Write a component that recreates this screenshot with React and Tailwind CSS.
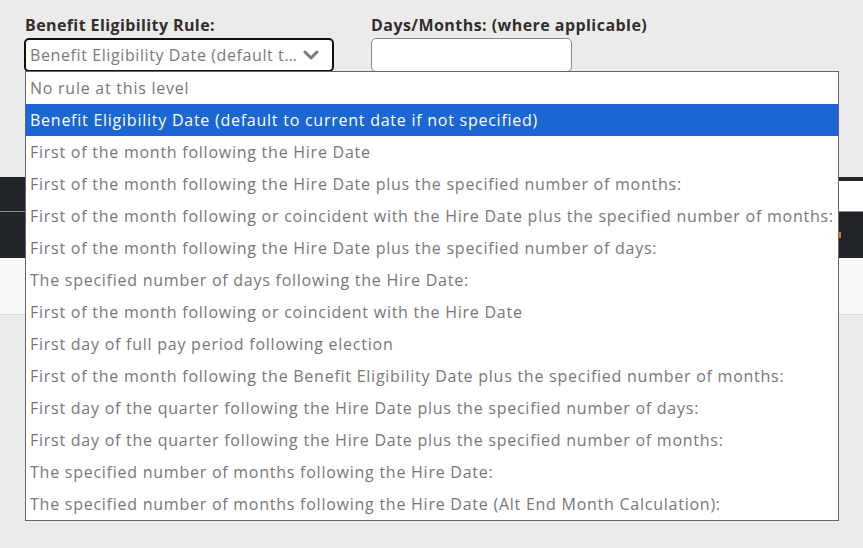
const RULES = [
  'No rule at this level',
  'Benefit Eligibility Date (default to current date if not specified)',
  'First of the month following the Hire Date',
  'First of the month following the Hire Date plus the specified number of months:',
  'First of the month following or coincident with the Hire Date plus the specified number of months:',
  'First of the month following the Hire Date plus the specified number of days:',
  'The specified number of days following the Hire Date:',
  'First of the month following or coincident with the Hire Date',
  'First day of full pay period following election',
  'First of the month following the Benefit Eligibility Date plus the specified number of months:',
  'First day of the quarter following the Hire Date plus the specified number of days:',
  'First day of the quarter following the Hire Date plus the specified number of months:',
  'The specified number of months following the Hire Date:',
  'The specified number of months following the Hire Date (Alt End Month Calculation):',
]

const SELECTED = 1

function Chevron() {
  return (
    <svg width="16" height="10" viewBox="0 0 16 10" className="shrink-0">
      <polyline points="2,2 8,8 14,2" fill="none" stroke="#7a7a7a" strokeWidth="3" strokeLinecap="round" strokeLinejoin="round" />
    </svg>
  )
}

export default function App() {
  return (
    <div className="min-h-[548px] bg-[#ebebeb] text-[16px] font-['Open_Sans','Liberation_Sans',sans-serif] [font-variant-ligatures:none]">
      {/* form row */}
      <div className="relative h-[177px] pt-[14px] pl-[25px]">
        <div className="flex gap-[37px]">
          <div className="flex flex-col">
            <label className="font-bold text-[#332e2c] leading-[22px] mb-[2px] tracking-[0.4px]">Benefit Eligibility Rule:</label>
            <div className="w-[310px] h-[34px] bg-white border-2 border-[#111] rounded-[5px] flex items-center justify-between pl-[4px] pr-[13px] -ml-px">
              <span className="text-[#7a7a7a] whitespace-nowrap tracking-[0.6px]">Benefit Eligibility Date (default t…</span>
              <Chevron />
            </div>
          </div>
          <div className="flex flex-col">
            <label className="font-bold text-[#332e2c] leading-[22px] mb-[2px] tracking-[0.45px]">Days/Months: (where applicable)</label>
            <div className="w-[201px] h-[34px] bg-white border border-[#8a8a8a] rounded-[5px]" />
          </div>
        </div>

        {/* open dropdown list */}
        <ul className="absolute z-10 left-[25px] top-[71px] w-[814px] bg-white border border-[#666] tracking-[0.75px]">
          {RULES.map((r, i) => (
            <li
              key={i}
              className={`h-[32px] flex items-center pl-[4px] whitespace-nowrap overflow-hidden ${
                i === SELECTED ? 'bg-[#1a66d2] text-white' : 'text-[#777]'
              }`}
            >
              {r}
            </li>
          ))}
        </ul>
      </div>

      {/* dark header band behind */}
      <div className="h-[4px] bg-[#212529]" />
      <div className="h-[30px] flex">
        <div className="flex-1 bg-[#212529]" />
        <div className="w-[25px] bg-white" />
      </div>
      <div className="h-px bg-[#8c8c8c]" />
      <div className="h-[46px] bg-[#212529] flex justify-end items-center pr-[22px]">
        <div className="w-[3px] h-[6px] bg-[#e07a10]" />
      </div>
      <div className="h-[57px] bg-[#f8f8f8] border-b border-[#dedede]" />
    </div>
  )
}
